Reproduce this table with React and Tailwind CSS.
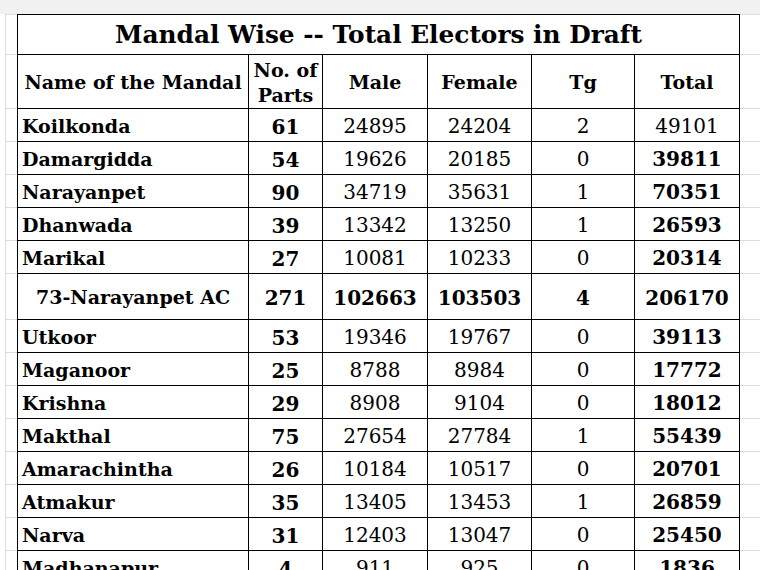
const rows = [
  ['Koilkonda', '61', '24895', '24204', '2', '49101', false],
  ['Damargidda', '54', '19626', '20185', '0', '39811', true],
  ['Narayanpet', '90', '34719', '35631', '1', '70351', true],
  ['Dhanwada', '39', '13342', '13250', '1', '26593', true],
  ['Marikal', '27', '10081', '10233', '0', '20314', true],
]

const rows2 = [
  ['Utkoor', '53', '19346', '19767', '0', '39113'],
  ['Maganoor', '25', '8788', '8984', '0', '17772'],
  ['Krishna', '29', '8908', '9104', '0', '18012'],
  ['Makthal', '75', '27654', '27784', '1', '55439'],
  ['Amarachintha', '26', '10184', '10517', '0', '20701'],
  ['Atmakur', '35', '13405', '13453', '1', '26859'],
  ['Narva', '31', '12403', '13047', '0', '25450'],
  ['Madhanapur', '4', '911', '925', '0', '1836'],
]

const cols = 'grid grid-cols-[231px_74px_105px_104px_103px_105px] border-l border-black'
const cell = 'flex items-center justify-center border-r border-b border-black pt-[2px]'

function Line({ h, children, top }) {
  return (
    <div className={`flex ${h}`}>
      <div className="w-[17px] flex">
        <div className="w-[5px]" />
        <div className={`flex-1 border-l border-b border-[#dcdcdc] ${top ? 'border-t' : ''}`} />
      </div>
      <div className="w-[723px]">{children}</div>
      <div className={`flex-1 border-b border-[#dcdcdc] ${top ? 'border-t' : ''}`} />
    </div>
  )
}

function DataRow({ r, boldTotal }) {
  return (
    <Line h="h-[33px]">
      <div className={`${cols} h-full`}>
        <div className="flex items-center border-r border-b border-black pl-[4px] pt-[2px] font-bold text-[19px]">{r[0]}</div>
        <div className={`${cell} pt-[3px] font-bold text-[20px]`}>{r[1]}</div>
        <div className={`${cell} text-[20px]`}>{r[2]}</div>
        <div className={`${cell} text-[20px]`}>{r[3]}</div>
        <div className={`${cell} text-[20px]`}>{r[4]}</div>
        <div className={`${cell} text-[20px] ${boldTotal ? 'font-bold' : ''}`}>{r[5]}</div>
      </div>
    </Line>
  )
}

export default function App() {
  return (
    <div className="w-[760px] h-[570px] overflow-hidden bg-white text-black font-['DejaVu_Serif',serif] leading-none">
      <div className="h-[14px] bg-[#f1f1f1]" />

      {/* Title */}
      <Line h="h-[41px]" top>
        <div className="h-full flex items-center justify-center border border-black pt-[2px] font-bold text-[24.8px]">
          Mandal Wise -- Total Electors in Draft
        </div>
      </Line>

      {/* Header */}
      <Line h="h-[54px]">
        <div className={`${cols} h-full font-bold text-[19px]`}>
          <div className={cell}>Name of the Mandal</div>
          <div className={`${cell} flex-col leading-[25px]`}>
            <span>No. of</span>
            <span>Parts</span>
          </div>
          <div className={cell}>Male</div>
          <div className={cell}>Female</div>
          <div className={cell}>Tg</div>
          <div className={cell}>Total</div>
        </div>
      </Line>

      {rows.map((r) => (
        <DataRow key={r[0]} r={r} boldTotal={r[6]} />
      ))}

      {/* Assembly constituency total */}
      <Line h="h-[46px]">
        <div className={`${cols} h-full font-bold text-[20px]`}>
          <div className={`${cell} text-[19px]`}>73-Narayanpet AC</div>
          <div className={cell}>271</div>
          <div className={cell}>102663</div>
          <div className={cell}>103503</div>
          <div className={cell}>4</div>
          <div className={cell}>206170</div>
        </div>
      </Line>

      {rows2.map((r) => (
        <DataRow key={r[0]} r={r} boldTotal />
      ))}
    </div>
  )
}
